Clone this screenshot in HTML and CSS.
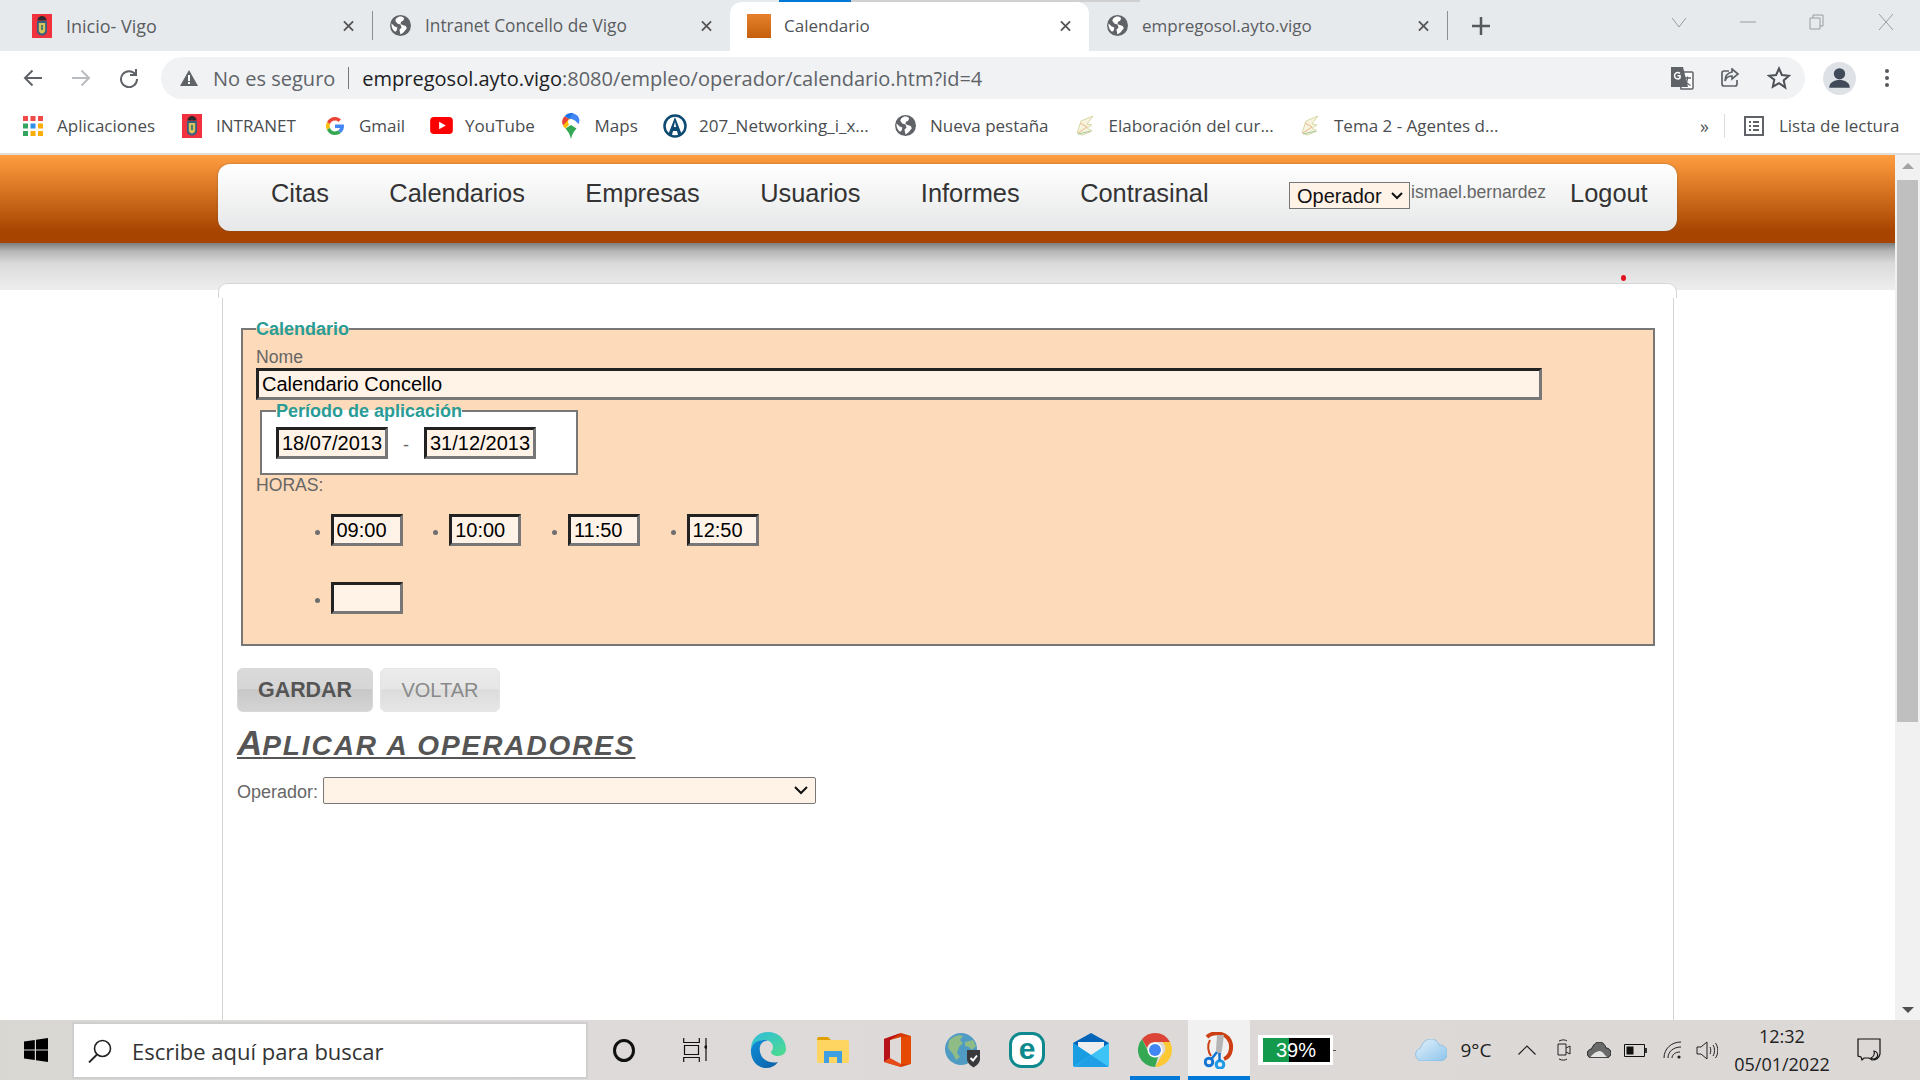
FILE: index.html
```html
<!DOCTYPE html>
<html lang="es">
<head>
<meta charset="utf-8">
<title>Calendario</title>
<link rel="stylesheet" href="styles.css">
</head>
<body>
<svg class="sprite" width="0" height="0">
  <defs>
    <symbol id="globe" viewBox="0 0 20 20">
      <circle cx="10" cy="10" r="10" fill="#5f6368"/>
      <path d="M9 1.500 6 3 5 5.500 7 8l3 1 1 3-2 2 1 4.500 3-2 3-4-1-2-3-1-2-1 .5-2 2-1 1-2.500C12.500 1.700 10.500 1.300 9 1.500ZM1.500 8 4.500 11l2.500 1-.5 2.500-1.500 1.500C3 14.500 1 11.500 1.500 8Z" fill="#fff"/>
    </symbol>
    <symbol id="crest" viewBox="0 0 20 24">
      <rect width="20" height="24" fill="#f0323f"/>
      <path d="M5.500 6.500c0-3 2-4.500 4.500-4.500s4.500 1.500 4.500 4.500Z" fill="#2d2a2e"/>
      <path d="M5 7h10v10c0 2.500-2.500 4.500-5 4.500S5 19.500 5 17Z" fill="#35607f"/>
      <path d="M6.800 9h6.400v7.500c0 1.500-1.500 3-3.200 3s-3.200-1.500-3.200-3Z" fill="#d8c25a"/>
      <path d="M9 11h2v5H9Z" fill="#4c7f6c"/>
    </symbol>
    <symbol id="leaf" viewBox="0 0 20 22">
      <path d="M18 1 6 6 2 18l5 2 10-4-5-3 5-3-5-1Z" fill="#f7f3df" stroke="#d9d8a8"/>
      <path d="M5 8l7 4-9 6" fill="none" stroke="#e7b98b"/>
      <path d="M3 19l13-3" fill="none" stroke="#a9c9a4"/>
    </symbol>
  </defs>
</svg>

<div class="chrome">
  <div class="tabstrip">
    <div class="tab tab-first">
      <svg class="fav-crest"><use href="#crest"/></svg>
      <span class="tab-title">Inicio- Vigo</span>
      <svg class="tab-x" viewBox="0 0 12 12"><path d="M1 1l10 10M11 1 1 11"/></svg>
    </div>
    <i class="tab-sep"></i>
    <div class="tab tab-second">
      <svg class="fav-globe"><use href="#globe"/></svg>
      <span class="tab-title">Intranet Concello de Vigo</span>
      <svg class="tab-x" viewBox="0 0 12 12"><path d="M1 1l10 10M11 1 1 11"/></svg>
    </div>
    <div class="tab tab-active">
      <span class="fav-orange"></span>
      <span class="tab-title">Calendario</span>
      <svg class="tab-x" viewBox="0 0 12 12"><path d="M1 1l10 10M11 1 1 11"/></svg>
    </div>
    <div class="tab tab-fourth">
      <svg class="fav-globe"><use href="#globe"/></svg>
      <span class="tab-title">empregosol.ayto.vigo</span>
      <svg class="tab-x" viewBox="0 0 12 12"><path d="M1 1l10 10M11 1 1 11"/></svg>
    </div>
    <i class="tab-sep tab-sep-last"></i>
    <svg class="new-tab" viewBox="0 0 18 18"><path d="M9 0v18M0 9h18"/></svg>
    <div class="win-controls">
      <svg viewBox="0 0 16 16"><path d="M1 4l7 9 7-9"/></svg>
      <svg viewBox="0 0 16 16"><path d="M0 8h16"/></svg>
      <svg viewBox="0 0 16 16"><path d="M1 4h10v11H1ZM4 4V1h10v11h-3"/></svg>
      <svg viewBox="0 0 16 16"><path d="M1 0l14 16M15 0 1 16"/></svg>
    </div>
  </div>

  <div class="toolbar">
    <svg class="tb-btn" viewBox="0 0 20 20"><path d="M19 10H2M9.500 2.500 2 10l7.500 7.500"/></svg>
    <svg class="tb-btn tb-off" viewBox="0 0 20 20"><path d="M1 10h17M10.500 2.500 18 10l-7.500 7.500"/></svg>
    <svg class="tb-btn" viewBox="0 0 20 20"><path d="M16.500 6.500A8 8 0 1 0 18 11M17 1v6h-6" /></svg>
    <div class="omnibox">
      <svg class="warn" viewBox="0 0 18 16"><path d="M9 0 18 16H0Z" fill="#5f6368"/><path d="M8 5h2v6H8ZM8 12h2v2H8Z" fill="#fff"/></svg>
      <span class="not-secure">No es seguro</span>
      <i class="omni-sep"></i>
      <span class="url"><b>empregosol.ayto.vigo</b>:8080/empleo/operador/calendario.htm?id=4</span>
      <svg class="translate" viewBox="0 0 24 24">
        <path d="M9 6h13a1 1 0 0 1 1 1v15a1 1 0 0 1-1 1H11Z" fill="#fff" stroke="#5f6368" stroke-width="1.500"/>
        <path d="M1 1h12l5 20H1Z" fill="#5f6368"/>
        <path d="M10 7.500A3.200 3.200 0 1 0 10 12V9.800H7.500" fill="none" stroke="#fff" stroke-width="1.500"/>
        <path d="M14 12h7M17.500 10.500V12c0 3-1.500 5.500-3.500 7M15.500 15c1 2 2.500 3.500 5 4.500" fill="none" stroke="#5f6368" stroke-width="1.300"/>
      </svg>
      <svg class="share" viewBox="0 0 20 20"><path d="M9 3H4a2 2 0 0 0-2 2v11a2 2 0 0 0 2 2h11a2 2 0 0 0 2-2v-4M12 1l6 5-6 5V8C8 8 6 10 5 13c0-5 3-8 7-9Z"/></svg>
      <svg class="star" viewBox="0 0 24 24"><path d="M12 2.500l2.900 6.500 7.100.7-5.300 4.700 1.500 7L12 17.100 5.800 20.700l1.500-7L2 9.700 9.100 9Z"/></svg>
    </div>
    <div class="avatar"><svg viewBox="0 0 32 32"><circle cx="16" cy="11.500" r="5.500" fill="#414a58"/><path d="M6 25c0-5 5-7.500 10-7.500S26 20 26 25Z" fill="#414a58"/></svg></div>
    <svg class="kebab" viewBox="0 0 4 18"><circle cx="2" cy="2" r="2"/><circle cx="2" cy="9" r="2"/><circle cx="2" cy="16" r="2"/></svg>
  </div>

  <div class="bookmarks">
    <div class="bm">
      <svg class="bm-apps" viewBox="0 0 20 20">
        <path fill="#ef4a45" d="M0 0h5v5H0ZM7.500 0h5v5h-5ZM15 0h5v5h-5Z"/>
        <path fill="#34a560" d="M0 7.500h5v5H0Z"/><path fill="#2f8fe8" d="M7.500 7.500h5v5h-5Z"/><path fill="#fbad09" d="M15 7.500h5v5h-5Z"/>
        <path fill="#34a560" d="M0 15h5v5H0Z"/><path fill="#fbad09" d="M7.500 15h5v5h-5ZM15 15h5v5h-5Z"/>
      </svg>
      <span>Aplicaciones</span>
    </div>
    <div class="bm">
      <svg class="fav-crest bm-crest"><use href="#crest"/></svg>
      <span>INTRANET</span>
    </div>
    <div class="bm">
      <svg class="bm-g" viewBox="0 0 18 18">
        <path fill="#ea4335" d="M9 3.600c1.300 0 2.500.5 3.400 1.300l2.500-2.500C13.400 1 11.400 0 9 0 5.500 0 2.400 2 1 5l2.900 2.300C4.600 5.100 6.600 3.600 9 3.600Z"/>
        <path fill="#fbbc04" d="M3.600 9c0-.6.1-1.200.3-1.700L1 5C.3 6.200 0 7.600 0 9s.3 2.800 1 4l2.900-2.300c-.2-.5-.3-1.100-.3-1.700Z"/>
        <path fill="#34a853" d="M9 14.400c-2.400 0-4.400-1.500-5.100-3.700L1 13c1.400 3 4.500 5 8 5 2.300 0 4.400-.8 6-2.200l-2.800-2.200c-.8.500-2 .8-3.200.8Z"/>
        <path fill="#4285f4" d="M17.800 7.400H9v3.500h5c-.3 1.200-1 2.100-1.800 2.700l2.800 2.200C16.800 14.200 18 11.900 18 9c0-.5-.1-1.100-.2-1.600Z"/>
      </svg>
      <span>Gmail</span>
    </div>
    <div class="bm">
      <svg class="bm-yt" viewBox="0 0 24 18"><rect width="24" height="18" rx="4" fill="#f00"/><path d="M9.500 5v8l7-4Z" fill="#fff"/></svg>
      <span>YouTube</span>
    </div>
    <div class="bm">
      <svg class="bm-maps" viewBox="0 0 18 26">
        <path fill="#34a853" d="M3.500 15.500C6 18.500 8 21 9 26c1-5 3-7.500 5.500-10.500L9 12Z"/>
        <path fill="#fbbc04" d="M1 12.500c.5 1.500 1.500 2 2.500 3L13 5.500 7 3.500Z"/>
        <path fill="#4285f4" d="M11.500.5 7 5.500l6 2 3.500 3.500C19 6.500 16 1.500 11.500.5Z"/>
        <path fill="#ea4335" d="M2.700 3.200C.2 5.500-.7 9.500 1 12.500L7 6Z"/>
        <path fill="#1a73e8" d="M2.700 3.200 7 6l4.500-5.500C8.500-.5 5 .500 2.700 3.200Z"/>
        <circle cx="9" cy="9" r="3" fill="#fff"/>
      </svg>
      <span>Maps</span>
    </div>
    <div class="bm">
      <svg class="bm-a" viewBox="0 0 24 24"><circle cx="12" cy="12" r="10.500" fill="#fff" stroke="#0c4a73" stroke-width="2.500"/><path d="M12 3 5 21h4l1-4h4l1 4h4Z" fill="#0c4a73"/><path d="M12 8l-1.200 5h2.400Z" fill="#fff"/></svg>
      <span>207_Networking_i_x...</span>
    </div>
    <div class="bm">
      <svg class="fav-globe"><use href="#globe"/></svg>
      <span>Nueva pestaña</span>
    </div>
    <div class="bm">
      <svg class="bm-leaf"><use href="#leaf"/></svg>
      <span>Elaboración del cur...</span>
    </div>
    <div class="bm">
      <svg class="bm-leaf"><use href="#leaf"/></svg>
      <span>Tema 2 - Agentes d...</span>
    </div>
    <div class="bm-right">
      <span class="chev">»</span>
      <i class="bm-sep"></i>
      <svg class="read-list" viewBox="0 0 20 20"><path d="M1 1h18v18H1Z" fill="none" stroke="#5f6368" stroke-width="2"/><path d="M5 6h2M9 6h6M5 10h2M9 10h6M5 14h2M9 14h6" stroke="#5f6368" stroke-width="2"/></svg>
      <span class="bm-lista">Lista de lectura</span>
    </div>
  </div>
</div>

<div class="viewport">
  <div class="page">
    <header class="banner">
      <nav class="nav">
        <a href="#">Citas</a>
        <a href="#">Calendarios</a>
        <a href="#">Empresas</a>
        <a href="#">Usuarios</a>
        <a href="#">Informes</a>
        <a href="#">Contrasinal</a>
        <select class="role"><option>Operador</option></select>
        <span class="user">ismael.bernardez</span>
        <a class="logout" href="#">Logout</a>
      </nav>
    </header>
    <main class="sheet">
      <span class="red-dot"></span>
      <div class="sheet-cap"></div>
      <div class="sheet-body">
        <fieldset class="cal">
          <legend>Calendario</legend>
          <label class="lbl lbl-name">Nome</label>
          <input class="inp inp-name" value="Calendario Concello">
          <fieldset class="period">
            <legend>Período de aplicación</legend>
            <div class="period-row">
              <input class="inp inp-date" value="18/07/2013">
              <span class="dash">-</span>
              <input class="inp inp-date" value="31/12/2013">
            </div>
          </fieldset>
          <div class="lbl lbl-hours">HORAS:</div>
          <ul class="hours">
            <li><input class="inp inp-time" value="09:00"></li>
            <li><input class="inp inp-time" value="10:00"></li>
            <li><input class="inp inp-time" value="11:50"></li>
            <li><input class="inp inp-time" value="12:50"></li>
            <li><input class="inp inp-time" value=""></li>
          </ul>
        </fieldset>
        <div class="actions">
          <button class="btn btn-save">GARDAR</button>
          <button class="btn btn-back">VOLTAR</button>
        </div>
        <h2 class="apply">Aplicar a operadores</h2>
        <div class="op-row">
          <label class="op-label">Operador:</label>
          <select class="op-select"><option></option></select>
        </div>
      </div>
    </main>
  </div>
  <div class="scrollbar">
    <span class="sb-up"></span>
    <span class="sb-thumb"></span>
    <span class="sb-down"></span>
  </div>
</div>

<footer class="taskbar">
  <svg class="win-logo" viewBox="0 0 24 24"><path d="M0 3.400 10.800 2v9.400H0ZM12 1.800 24 0v11.400H12ZM0 12.600h10.800V22L0 20.600ZM12 12.600h12V24l-12-1.800Z" fill="#000"/></svg>
  <div class="search">
    <svg class="lens" viewBox="0 0 24 24"><circle cx="14.500" cy="9.500" r="8" fill="none" stroke="#222" stroke-width="1.600"/><path d="M9 15.500 1 23.500" stroke="#222" stroke-width="1.800"/></svg>
    <span>Escribe aquí para buscar</span>
  </div>
  <div class="tasks">
    <span class="cortana"></span>
    <svg class="taskview" viewBox="0 0 24 24"><path d="M.7 0v4.500h15.600V0M.7 24v-4.500h15.600V24M1.500 7.500h14v9h-14ZM23 0v23" fill="none" stroke="#111" stroke-width="1.200"/><circle cx="23" cy="9" r="1.700" fill="#111"/></svg>
    <svg class="app-edge" viewBox="0 0 36 36">
      <defs>
        <linearGradient id="eg" x1="0" y1="0" x2="1" y2="1"><stop offset="0" stop-color="#2ebce0"/><stop offset="1" stop-color="#4fdc8a"/></linearGradient>
        <linearGradient id="eb" x1="0" y1="0" x2="1" y2="1"><stop offset="0" stop-color="#0f8fd8"/><stop offset="1" stop-color="#0c5fa6"/></linearGradient>
      </defs>
      <path d="M18 0C28 0 36 7 36 17c0 4-3 7-8 7-4 0-7-2-7-4 0-1 2-1 2-5 0-4-4-7-8-7C9 8 3 11 1 17 1 7 8 0 18 0Z" fill="url(#eg)"/>
      <path d="M1 17C3 10 9 8 15 8c2 0 3 .5 3 .5C10 9 8 16 11 23c2 5 9 9 17 7-3 4-7 6-12 6C7 36 0 28 1 17Z" fill="url(#eb)"/>
    </svg>
    <svg class="app-folder" viewBox="0 0 32 26"><path d="M0 2a2 2 0 0 1 2-2h9l3 3H0Z" fill="#e0a100"/><path d="M0 3h30a2 2 0 0 1 2 2v19a2 2 0 0 1-2 2H2a2 2 0 0 1-2-2Z" fill="#ffd562"/><path d="M7 26V14h18v12h-5v-6h-8v6Z" fill="#3f9fe0"/></svg>
    <svg class="app-office" viewBox="0 0 27 34"><path d="M17 0 27 3v28l-10 3-17-5 17 2V4L6 7v18l-6 4V6Z" fill="#d83b01"/><path d="M17 0 6 7v18l-6 4V6Z" fill="#b5121b"/><path d="M0 29 6 25l11 6v3Z" fill="#e64a19"/><path d="M17 4v27l10 0V3Z" fill="#e64a00"/></svg>
    <svg class="app-globe" viewBox="0 0 36 35">
      <circle cx="16" cy="16" r="16" fill="#4f9bc4"/>
      <path d="M4 8c4-5 10-7 14-5l-3 4 3 3-4 4-2 6 3 4-4 3-3-6-5-6ZM20 9l8-2 3 6-4 4-3-3-4-1Z" fill="#8fbb87"/>
      <path d="M22 17l13 0v9c0 4-4 7-6.500 8.500C26 33 22 30 22 26Z" fill="#3a3a3c"/>
      <path d="M25.500 25l2.500 2.500 4-5" fill="none" stroke="#fff" stroke-width="2"/>
    </svg>
    <svg class="app-eset" viewBox="0 0 36 36"><rect x="1.500" y="1.500" width="33" height="33" rx="11" fill="#fff" stroke="#0e8a8f" stroke-width="3"/><text x="18" y="27" text-anchor="middle" class="eset-e">e</text></svg>
    <svg class="app-mail" viewBox="0 0 36 34"><path d="M0 10 18 0l18 10v6H0Z" fill="#0364b8"/><path d="M5 9h26v14H5Z" fill="#eee"/><path d="M0 10v22a2 2 0 0 0 2 2h32a2 2 0 0 0 2-2V10L18 22Z" fill="#3dc3f5"/><path d="M0 32V10l18 12L1 34Z" fill="#1b9de2"/><path d="M18 22l18 12H2Z" fill="#1490df" opacity=".7"/></svg>
    <div class="app-slot">
      <svg class="app-chrome" viewBox="0 0 34 34">
        <path d="M17 0a17 17 0 0 1 15 9H17a8 8 0 0 0-8 6L4 6a17 17 0 0 1 13-6Z" fill="#db4437"/>
        <path d="M32 9a17 17 0 0 1-15 25l7-12a8 8 0 0 0 0-13Z" fill="#fcc934"/>
        <path d="M4 6l6 12a8 8 0 0 0 10 6l-3 10A17 17 0 0 1 4 6Z" fill="#34a853"/>
        <circle cx="17" cy="17" r="7.500" fill="#fff"/><circle cx="17" cy="17" r="6" fill="#4285f4"/>
      </svg>
    </div>
    <div class="app-active">
      <svg class="app-snip" viewBox="0 0 30 37">
        <path d="M3 5C8 0 18 0 24 6c5 6 4 18-4 21" fill="none" stroke="#cc3f12" stroke-width="4"/>
        <path d="M6 8c-3 5-2 12 1 16" fill="none" stroke="#cc3f12" stroke-width="2"/>
        <path d="M13 3h7l-2 15-2 8-4-8Z" fill="#b5b5b5"/>
        <circle cx="5" cy="30" r="3.800" fill="none" stroke="#1476d2" stroke-width="3"/>
        <circle cx="16" cy="32.500" r="3.800" fill="none" stroke="#1f9be8" stroke-width="3"/>
        <path d="M7.500 27 13 20M15.500 29V21" stroke="#1476d2" stroke-width="2.500" fill="none"/>
      </svg>
    </div>
    <div class="battery-meter">
      <div class="meter-bar"><span class="meter-text">39%</span></div>
      <i class="meter-nub"></i>
    </div>
  </div>
  <div class="tray">
    <svg class="t-cloud" viewBox="0 0 32 22"><defs><linearGradient id="cl" x1="0" y1="0" x2="1" y2="1"><stop offset="0" stop-color="#e3f1fb"/><stop offset="1" stop-color="#8cc4ec"/></linearGradient></defs><path d="M7 22a6.500 6.500 0 0 1-1.500-12.800C7 4 11 0 16 0c4 0 7 2.500 8 6a8 8 0 0 1 1 16Z" fill="url(#cl)" stroke="#6bb0e2" stroke-width=".6"/></svg>
    <span class="t-temp">9°C</span>
    <svg class="t-caret" viewBox="0 0 18 10"><path d="M.5 9.500 9 1l8.500 8.500"/></svg>
    <svg class="t-cam" viewBox="0 0 17 22"><path d="M3 5h8v11H3ZM11 9l4-2v8l-4-2M4 2c3-1.500 6-1.500 8 0M4 20c3 1.500 6 1.500 8 0"/></svg>
    <svg class="t-drive" viewBox="0 0 24 16"><path d="M5 16a4.500 4.500 0 0 1-.5-9C6 3 9 0 12 0c3 0 6 2 7 6a5 5 0 0 1 0 10Z" fill="#6a6a6a" stroke="#222"/><path d="M3.500 15c1-2 6-6 9-6s5 4 7.500 6Z" fill="#e6e4e2"/></svg>
    <svg class="t-batt" viewBox="0 0 23 13"><path d="M.5.500h20v12H.5Z" fill="none" stroke="#111"/><path d="M2.500 2.500h7v8h-7Z" fill="#111"/><path d="M21 4h2v5h-2Z" fill="#333"/></svg>
    <svg class="t-wifi" viewBox="0 0 19 18"><path d="M1 17C1 8 8 1 18 1M5 17c0-6 5-11 13-11M9 17c0-3 3-6 8-6"/><circle cx="16" cy="16" r="1.600" fill="#222" stroke="none"/></svg>
    <svg class="t-vol" viewBox="0 0 22 19"><path d="M1 6h4l6-5v17l-6-5H1ZM14 6c1 2 1 5 0 7M17 4c2 3 2 8 0 11M19.500 2c3 4 3 11 0 15"/></svg>
    <div class="clock"><span>12:32</span><span>05/01/2022</span></div>
    <svg class="t-notif" viewBox="0 0 24 24"><path d="M1 1h22v15c-1 4-4 6-8 6l-3-2-5 0-2 2-1-3-3-1Z" fill="none" stroke="#111" stroke-width="1.200"/><path d="M17 13a4 4 0 1 1-3 7 6 6 0 0 0 3-7Z" fill="none" stroke="#111" stroke-width="1.100"/></svg>
  </div>
</footer>
</body>
</html>
```
FILE: styles.css
```css
* { box-sizing: border-box; }
html, body { margin: 0; padding: 0; height: 1080px; overflow: hidden; }
body { width: 1920px; display: flex; flex-direction: column; background: #fff; font-family: "Liberation Sans", Arial, sans-serif; }
.sprite { position: absolute; }
i { display: block; font-style: normal; }

/* Browser chrome */
.chrome { height: 155px; flex: none; font-family: "Open Sans", "Noto Sans", sans-serif; border-bottom: 2px solid #dedede; }
.tabstrip { height: 51px; background: #e7eaed; display: flex; align-items: center; }
.tab { height: 51px; display: flex; align-items: center; flex: none; font-size: 17px; color: #5a5d61; position: relative; }
.tab-title { white-space: nowrap; }
.tab-x { width: 11px; height: 12px; margin-left: auto; fill: none; stroke: #555; stroke-width: 2; flex: none; }
.tab-first { width: 354px; padding-left: 32px; font-size: 18px; }
.tab-first .tab-title { margin-left: 14px; }
.tab-sep { width: 1px; height: 29px; background: #8c8f93; margin-left: 18px; flex: none; }
.tab-second { width: 339px; padding-left: 17px; margin-right: 18px; font-size: 17.300px; }
.tab-second .tab-title { margin-left: 14px; }
.tab-active { width: 359px; height: 49px; margin-top: 2px; background: #fff; border-radius: 12px 12px 0 0; padding: 0 18px 2px 17px; color: #4f5256; }
.tab-active::before { content: ""; position: absolute; left: 49px; top: -2px; width: 72px; height: 2px; background: #0078d7; }
.tab-active::after { content: ""; position: absolute; left: 121px; top: -2px; width: 289px; height: 2px; background: #d0d0d0; }
.tab-active .tab-title { margin-left: 13px; }
.tab-fourth { width: 340px; padding-left: 18px; }
.tab-fourth .tab-title { margin-left: 14px; }
.tab-sep-last { margin-left: 18px; }
.fav-crest { width: 20px; height: 24px; flex: none; }
.fav-globe { width: 21px; height: 21px; flex: none; }
.fav-orange { width: 24px; height: 24px; flex: none; background: linear-gradient(#e6802c, #c4600d); }
.new-tab { width: 18px; height: 18px; margin-left: 24px; stroke: #55585c; stroke-width: 2.500; flex: none; }
.win-controls { display: flex; margin-left: auto; height: 51px; align-items: flex-start; padding: 14px 26px 0 0; gap: 53px; }
.win-controls svg { width: 16px; height: 16px; fill: none; stroke: #9a9c9f; stroke-width: 1; }

.toolbar { height: 51px; display: flex; align-items: center; padding: 3px 0 0 23px; }
.tb-btn { width: 20px; height: 20px; flex: none; fill: none; stroke: #5f6368; stroke-width: 2; margin-right: 28px; }
.tb-off { stroke: #b9bcc0; }
.tb-btn:nth-child(3) { margin-right: 22px; }
.omnibox { width: 1644px; height: 42px; border-radius: 21px; background: #f0f2f4; display: flex; align-items: center; padding-left: 19px; flex: none; }
.warn { width: 18px; height: 16px; flex: none; }
.not-secure { margin-left: 15px; font-size: 20px; color: #5f6368; white-space: nowrap; }
.omni-sep { width: 1px; height: 22px; background: #73767a; margin-left: 13px; flex: none; }
.url { margin-left: 13px; font-size: 20px; color: #5f6368; white-space: nowrap; }
.url b { font-weight: 400; color: #202124; }
.translate { width: 24px; height: 24px; flex: none; margin-left: auto; }
.share { width: 20px; height: 20px; flex: none; margin-left: 26px; fill: none; stroke: #5f6368; stroke-width: 1.700; }
.star { width: 24px; height: 24px; flex: none; margin-left: 27px; margin-right: 14px; fill: none; stroke: #4d5155; stroke-width: 2; }
.avatar { width: 33px; height: 33px; border-radius: 50%; background: #dee1e6; margin-left: 18px; flex: none; }
.avatar svg { width: 33px; height: 33px; display: block; }
.kebab { width: 4px; height: 18px; fill: #55585c; margin-left: 29px; flex: none; }

.bookmarks { height: 51px; display: grid; grid-template-columns: 159px 144px 104px 131.500px 101.500px 232px 179.500px 225.500px 300px 1fr; padding: 0 0 4px 23px; align-items: center; font-size: 17px; color: #4a4d50; }
.bm { display: flex; align-items: center; white-space: nowrap; min-width: 0; }
.bm-apps { width: 20px; height: 20px; flex: none; margin-right: 14px; }
.bm-crest { margin-right: 14px; }
.bm-g { width: 18px; height: 18px; flex: none; margin-right: 15px; }
.bm-yt { width: 23px; height: 17px; flex: none; margin-right: 12px; }
.bm-maps { width: 18px; height: 26px; flex: none; margin-right: 15px; }
.bm-a { width: 24px; height: 24px; flex: none; margin-right: 12px; }
.bm .fav-globe { margin-right: 14px; }
.bm-leaf { width: 20px; height: 22px; flex: none; margin-right: 14px; }
.bm-right { display: flex; align-items: center; white-space: nowrap; }
.chev { margin-left: 100px; font-size: 18px; color: #55585c; }
.bm-sep { width: 1px; height: 24px; background: #dcdcdc; margin-left: 15px; flex: none; }
.read-list { width: 20px; height: 20px; flex: none; margin-left: 19px; }
.bm-lista { margin-left: 15px; }

/* Page viewport */
.viewport { height: 865px; flex: none; display: flex; overflow: hidden; }
.page { flex: 1; min-width: 0; background: linear-gradient(#7c7c7c 0, #b5b5b5 8px, #d9d9d9 20px, #e3e3e3 32px, #eeeeee 47px) 0 88px / 100% 47px no-repeat #fff; }
.banner { height: 88px; padding: 9px 0 0 218px; background: linear-gradient(#ff9d40 0, #a64400 88%, #a64400 100%); }
.nav { width: 1459px; height: 67px; display: flex; align-items: center; padding: 0 0 8px 53px; background: linear-gradient(#fff, #e6e7e8); border-radius: 12px; box-shadow: 0 0 2px rgba(80, 80, 80, .6); }
.nav a { font-size: 25.400px; color: #333; text-decoration: none; margin-right: 60.500px; white-space: nowrap; }
.role { appearance: none; width: 121px; height: 27px; margin: 4px 0 0 20px; padding: 0 0 0 7px; font: 20px "Liberation Sans", Arial, sans-serif; color: #111; background: #fff3e8 url("data:image/svg+xml,%3Csvg xmlns='http://www.w3.org/2000/svg' width='12' height='8'%3E%3Cpath d='M1 1l5 5 5-5' fill='none' stroke='%23111' stroke-width='2'/%3E%3C/svg%3E") no-repeat right 6px center; border: 1px solid #777; border-radius: 0; flex: none; }
.user { font-size: 17.600px; color: #666; margin: 0 0 3px 1px; white-space: nowrap; }
.nav .logout { margin: 0 0 0 24px; }

.sheet { width: 1459px; height: 737px; margin: 40px 0 0 218px; position: relative; }
.red-dot { position: absolute; left: 1403px; top: -8px; width: 5px; height: 6px; border-radius: 50%; background: #e3101f; }
.sheet-cap { height: 15px; border: 1px solid #d6d6d6; border-bottom: 0; border-radius: 9px 9px 0 0; background: #fff; }
.sheet-body { height: 722px; margin: 0 3px 0 4px; padding: 21px 15px 0 14px; background: #fff; border: solid #d3d3d3; border-width: 0 1px; }

.cal { width: 1414px; height: 327px; margin: 0 0 0 4px; padding: 0 0 0 13px; background: #fddab9; border: 2px solid #777; }
.cal legend, .period legend { padding: 0; font-size: 18px; line-height: 20px; font-weight: 700; color: #2a9c96; }
.lbl { display: block; font-size: 17.600px; line-height: 20px; color: #666; }
.lbl-name { margin-top: 8px; }
.inp { display: block; height: 32px; padding: 0 0 0 3px; border: 3px solid; border-color: #222 #777 #777 #222; background: #fff3e8; font: 20px "Liberation Sans", Arial, sans-serif; color: #000; outline: 0; border-radius: 0; }
.inp-name { width: 1286px; margin-top: 1px; }
.period { width: 318px; height: 74px; margin: 1px 0 0 4px; padding: 0 0 0 14px; background: #fff; border: 2px solid #777; }
.period-row { display: flex; align-items: center; margin-top: 6px; }
.inp-date { width: 112px; }
.dash { width: 36px; text-align: center; color: #666; font-size: 18px; margin-top: 4px; }
.lbl-hours { margin-top: 0; }
.hours { list-style: none; margin: 19px 0 0; padding: 0 0 0 58.500px; display: grid; grid-template-columns: repeat(4, 118.700px); grid-auto-rows: 32px; row-gap: 36px; }
.hours li { display: flex; align-items: center; }
.hours li::before { content: ""; width: 5px; height: 5px; margin: 4px 11px 0 0; border-radius: 50%; background: #6e6e6e; flex: none; }
.inp-time { width: 72px; }

.actions { display: flex; gap: 7px; margin-top: 22px; }
.btn { height: 44px; border: 1px solid #d8d8d8; border-radius: 6px; padding: 0; font-family: "Liberation Sans", Arial, sans-serif; font-size: 20px; }
.btn-save { width: 136px; font-size: 21.400px; font-weight: 700; color: #555; background: linear-gradient(#dadada 0, #d6d6d6 48%, #c8c8c8 49%, #d4d4d4 100%); }
.btn-back { width: 120px; color: #8a8a8a; background: linear-gradient(#ececec 0, #e6e6e6 48%, #dcdcdc 49%, #e6e6e6 100%); border-color: #e4e4e4; }
.apply { margin: 12px 0 0; font-size: 28px; line-height: 38px; letter-spacing: 1.900px; font-style: italic; font-weight: 700; text-transform: uppercase; color: #555; text-decoration: underline; white-space: nowrap; }
.apply::first-letter { font-size: 35px; letter-spacing: 0; }
.op-row { display: flex; align-items: center; margin-top: 12px; }
.op-label { font-size: 18px; color: #666; width: 86px; flex: none; margin-top: 3px; }
.op-select { appearance: none; width: 493px; height: 27px; background: #fff3e8 url("data:image/svg+xml,%3Csvg xmlns='http://www.w3.org/2000/svg' width='14' height='9'%3E%3Cpath d='M1 1l6 6 6-6' fill='none' stroke='%23111' stroke-width='2'/%3E%3C/svg%3E") no-repeat right 7px center; border: 1px solid #777; border-radius: 2px; flex: none; font: 18px "Liberation Sans", Arial, sans-serif; }

.scrollbar { width: 25px; flex: none; background: #f1f1f1; display: flex; flex-direction: column; align-items: center; padding: 8px 0 7px; }
.sb-up, .sb-down { width: 0; height: 0; border-left: 6px solid transparent; border-right: 6px solid transparent; flex: none; }
.sb-up { border-bottom: 6px solid #a3a3a3; }
.sb-down { border-top: 6px solid #505050; margin-top: auto; }
.sb-thumb { width: 21px; height: 542px; margin-top: 11px; background: #bfbfbf; flex: none; }

/* Taskbar */
.taskbar { height: 60px; flex: none; display: flex; align-items: stretch; background: linear-gradient(90deg, #d9d7d2, #dedad9 30%, #dcd8d6); font-family: "Open Sans", "Noto Sans", sans-serif; color: #222; }
.win-logo { width: 24px; height: 24px; margin: 18px 24px 0 24px; flex: none; }
.search { width: 516px; height: 57px; margin-top: 2px; background: #fff; border: 2px solid #cfcfcf; display: flex; align-items: center; padding-left: 14px; flex: none; font-size: 22px; color: #333; }
.lens { width: 24px; height: 24px; flex: none; margin-right: 20px; }
.tasks { display: flex; align-items: center; flex: none; width: 747px; }
.cortana { width: 22px; height: 23px; margin-left: 25px; border: 3.500px solid #111; border-radius: 50%; flex: none; }
.taskview { width: 24px; height: 24px; margin-left: 48px; flex: none; }
.app-edge { width: 36px; height: 36px; margin-left: 43px; flex: none; }
.app-folder { width: 32px; height: 26px; margin-left: 31px; flex: none; }
.app-office { width: 27px; height: 34px; margin-left: 35px; flex: none; }
.app-globe { width: 36px; height: 35px; margin-left: 34px; flex: none; }
.app-eset { width: 36px; height: 36px; margin-left: 28px; flex: none; }
.eset-e { font: 700 30px "Liberation Sans", Arial, sans-serif; fill: #0e8a8f; }
.app-mail { width: 36px; height: 34px; margin-left: 28px; flex: none; }
.app-slot { width: 50px; height: 60px; margin-left: 21px; border-bottom: 4px solid #0078d7; display: flex; align-items: center; justify-content: center; flex: none; }
.app-chrome { width: 34px; height: 34px; flex: none; margin-top: 4px; }
.app-active { width: 62px; height: 60px; margin-left: 8px; background: #f1f1f1; border-bottom: 4px solid #0078d7; display: flex; align-items: center; justify-content: center; flex: none; }
.app-snip { width: 30px; height: 37px; margin-top: 4px; }
.battery-meter { display: flex; align-items: center; margin-left: 8px; flex: none; }
.meter-bar { width: 75px; height: 30px; border: 3px solid #fff; border-left-width: 5px; background: linear-gradient(90deg, #149a4c 39%, #000 39%); display: flex; align-items: center; justify-content: flex-end; padding-right: 14px; }
.meter-text { font-size: 20px; color: #fff; font-family: "Liberation Sans", Arial, sans-serif; }
.meter-nub { width: 3px; height: 1px; background: #555; }
.tray { flex: 1; display: flex; align-items: center; }
.t-cloud { width: 32px; height: 22px; margin-left: 79.500px; flex: none; }
.t-temp { margin-left: 14px; font-size: 19px; color: #222; }
.t-caret { width: 18px; height: 10px; margin-left: 27px; fill: none; stroke: #222; stroke-width: 1.200; flex: none; }
.t-cam { width: 17px; height: 22px; margin-left: 19px; fill: none; stroke: #222; stroke-width: 1; flex: none; }
.t-drive { width: 24px; height: 16px; margin-left: 15px; flex: none; }
.t-batt { width: 23px; height: 13px; margin-left: 13px; flex: none; }
.t-wifi { width: 19px; height: 18px; margin-left: 16px; fill: none; stroke: #222; stroke-width: 1; flex: none; }
.t-vol { width: 22px; height: 19px; margin-left: 14px; fill: none; stroke: #222; stroke-width: 1; flex: none; }
.clock { display: flex; flex-direction: column; align-items: center; width: 93px; margin-left: 17px; font-size: 18px; line-height: 28px; color: #222; flex: none; }
.t-notif { width: 24px; height: 24px; margin-left: 29px; flex: none; }
```
